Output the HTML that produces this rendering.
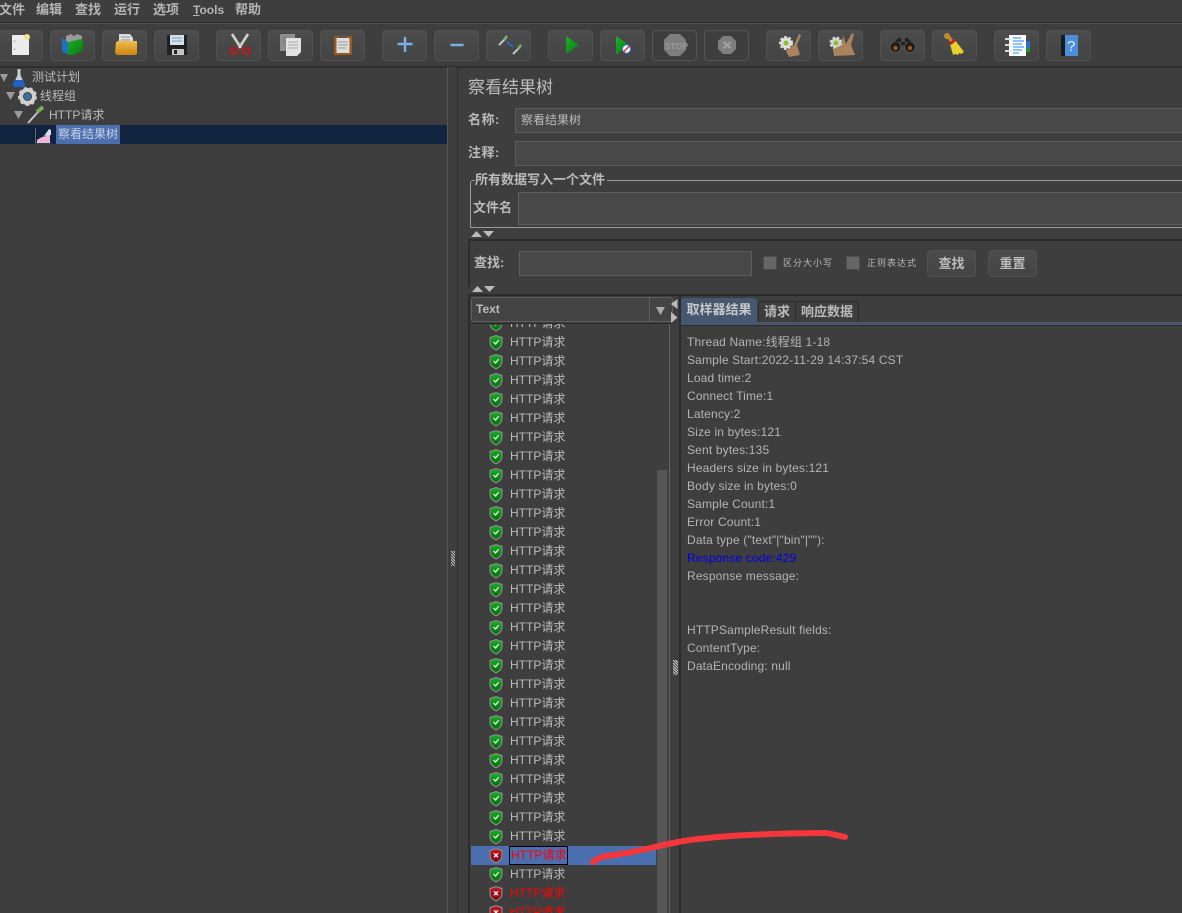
<!DOCTYPE html>
<html><head><meta charset="utf-8"><style>
html,body{margin:0;padding:0;background:#3e3e3e;}
#p{position:relative;width:1182px;height:913px;overflow:hidden;background:#3e3e3e;color:#bbb;font-family:"Liberation Sans","WenQuanYi Zen Hei","Noto Sans CJK SC",sans-serif;font-size:12px;}
#p div{position:absolute;white-space:nowrap;}
.m{top:2px;font-size:13px;font-weight:bold;color:#b5b5b5;line-height:16px;}
.b{top:30px;width:43px;height:29px;border:1px solid #505050;border-radius:4px;background:linear-gradient(#4c4c4c,#444);}
.d{background:#3e3e3e!important;border-color:#555!important;}
.i{position:absolute;left:0;top:0;}
.r{font-size:12px;line-height:19px;height:19px;color:#bbb;}
.t{left:687px;font-size:12px;line-height:18px;color:#b4b4b4;letter-spacing:.16px;}
.f{background:#484848;border:1px solid #5e5e5e;box-sizing:border-box;}
</style></head><body><div id="p">
<svg width="0" height="0" style="position:absolute"><defs>
<linearGradient id="gg" x1="0" y1="0" x2="0" y2="1"><stop offset="0" stop-color="#17ae22"/><stop offset="1" stop-color="#04700c"/></linearGradient>
<linearGradient id="rg" x1="0" y1="0" x2="0" y2="1"><stop offset="0" stop-color="#c8161e"/><stop offset="1" stop-color="#820610"/></linearGradient>
<linearGradient id="pl" x1="0" y1="0" x2="0" y2="1"><stop offset="0" stop-color="#8fc0f0"/><stop offset="1" stop-color="#3d82d0"/></linearGradient>
<linearGradient id="pg" x1="0" y1="0" x2="1" y2="1"><stop offset="0" stop-color="#1fb02a"/><stop offset="1" stop-color="#05780e"/></linearGradient>
<linearGradient id="fo" x1="0" y1="0" x2="0" y2="1"><stop offset="0" stop-color="#f0bd50"/><stop offset="1" stop-color="#c98510"/></linearGradient>
<g id="ok"><path d="M7 0 L13.500 2 V7.500 C13.500 11.500 10.500 14 7 15.500 C3.500 14 .5 11.500 .5 7.500 V2Z" fill="#8c8c8c"/><path d="M7 1.300 L12.400 3 V7.500 C12.400 10.800 9.900 12.900 7 14.100 C4.100 12.900 1.600 10.800 1.600 7.500 V3Z" fill="url(#gg)"/><path d="M4.600 7 L6.500 9 L9.600 5.200" fill="none" stroke="#fff" stroke-width="1.200"/></g>
<g id="er"><path d="M7 0 L13.500 2 V7.500 C13.500 11.500 10.500 14 7 15.500 C3.500 14 .5 11.500 .5 7.500 V2Z" fill="#8c8c8c"/><path d="M7 1.300 L12.400 3 V7.500 C12.400 10.800 9.900 12.900 7 14.100 C4.100 12.900 1.600 10.800 1.600 7.500 V3Z" fill="url(#rg)"/><path d="M5 5.300 L9 9.300 M9 5.300 L5 9.300" fill="none" stroke="#fff" stroke-width="1.300"/></g>
</defs></svg>

<div class="m" style="left:-1px">文件</div><div class="m" style="left:36px">编辑</div><div class="m" style="left:75px">查找</div><div class="m" style="left:114px">运行</div><div class="m" style="left:153px">选项</div><div class="m" style="left:193px;font-family:'Liberation Sans',sans-serif;font-size:12px"><u>T</u>ools</div><div class="m" style="left:235px">帮助</div>

<div style="left:0;top:22px;width:1182px;height:1px;background:#2b2b2b"></div>
<div style="left:0;top:23px;width:1182px;height:1px;background:#555"></div>
<div style="left:0;top:66px;width:1182px;height:1px;background:#2e2e2e"></div>

<div class="b" style="left:-2px"><svg class="i" width="43" height="29"><rect x="13" y="4" width="17" height="20" fill="#ececec"/><circle cx="15.500" cy="10" r=".8" fill="#999"/><circle cx="15.500" cy="18" r=".8" fill="#999"/><circle cx="28" cy="6" r="3" fill="#f4e48a"/></svg></div>
<div class="b" style="left:50px"><svg class="i" width="43" height="29"><path d="M15 5l5-2 3 2 3-2 5 2v9H15z" fill="#9a9a9a"/><path d="M11 7l6 4v13l-6-4z" fill="#1d72c4"/><path d="M17 11l13-3 2 2v9l-9 5h-6z" fill="url(#pg)"/></svg></div>
<div class="b" style="left:102px"><svg class="i" width="43" height="29"><path d="M16 3h11l3 4v8H16z" fill="#dcdcdc"/><path d="M18 6h9M18 9h9" stroke="#999"/><path d="M13 11l2-1h19v13l-2 1H14l-2-2z" fill="url(#fo)"/></svg></div>
<div class="b" style="left:154px"><svg class="i" width="43" height="29"><path d="M12 4h20v20H12z" fill="#202020"/><path d="M15 4h14v10H15z" fill="#cfe0f0"/><path d="M17 7h10M17 10h10" stroke="#8aa0b8"/><path d="M17 18h12v6H17z" fill="#c5c5c5"/><path d="M19 19h3v4h-3z" fill="#222"/></svg></div>
<div class="b" style="left:216px"><svg class="i" width="43" height="29"><path d="M15 3 L24 17 M31 3 L22 17" stroke="#d0d0d0" stroke-width="2.600" fill="none"/><circle cx="17" cy="20" r="3.200" fill="none" stroke="#c4161c" stroke-width="2"/><circle cx="29" cy="20" r="3.200" fill="none" stroke="#c4161c" stroke-width="2"/></svg></div>
<div class="b" style="left:268px"><svg class="i" width="43" height="29"><rect x="11" y="3" width="15" height="17" fill="#8e8e8e"/><path d="M14 7h8M14 10h8M14 13h8" stroke="#777"/><path d="M17 7h15v14l-4 4H17z" fill="#e2e2e2"/><path d="M19 11h10M19 14h10M19 17h10" stroke="#aaa"/></svg></div>
<div class="b" style="left:320px"><svg class="i" width="43" height="29"><rect x="13" y="5" width="18" height="19" rx="1" fill="#9a5a1e"/><rect x="15.500" y="7" width="13" height="15" fill="#ddd"/><path d="M17 11h10M17 14h10M17 17h8" stroke="#999"/><rect x="18" y="4" width="8" height="3" fill="#555"/></svg></div>
<div class="b" style="left:382px"><svg class="i" width="43" height="29"><path d="M14.500 13h15M22 6v15" stroke="#79b0ea" stroke-width="2.400" fill="none"/></svg></div>
<div class="b" style="left:434px"><svg class="i" width="43" height="29"><path d="M15.500 14h13" stroke="#7baee6" stroke-width="2.500" fill="none"/></svg></div>
<div class="b" style="left:486px"><svg class="i" width="43" height="29"><path d="M12 14L19 7M26 23L33 16" stroke="#c5c5c5" stroke-width="2"/><path d="M17 9L20 5M31 18L34 14" stroke="#7db36c" stroke-width="2.500"/><path d="M20 11L26 16" stroke="#1e78e0" stroke-width="1.500"/></svg></div>
<div class="b" style="left:548px"><svg class="i" width="43" height="29"><path d="M17 5L30 14L17 23Z" fill="url(#pg)"/></svg></div>
<div class="b" style="left:600px"><svg class="i" width="43" height="29"><path d="M15 5L28 14L15 24Z" fill="url(#pg)"/><circle cx="25.500" cy="18" r="4.200" fill="#e8f0fa" stroke="#2a70c8"/><path d="M22.500 21L28.500 15" stroke="#d22" stroke-width="1.300"/></svg></div>
<div class="b d" style="left:652px"><svg class="i" width="43" height="29"><path d="M17 3h10l6 6v10l-6 6H17l-6-6V9z" fill="#7e7e7e"/><text x="12" y="18" font-family="Liberation Sans" font-size="8.500" font-weight="bold" fill="#9a9a9a">STOP</text></svg></div>
<div class="b d" style="left:704px"><svg class="i" width="43" height="29"><path d="M18 5h8l5 5v8l-5 5h-8l-5-5v-8z" fill="#7e7e7e"/><path d="M18.500 11l7 6M25.500 11l-7 6" stroke="#a0a0a0" stroke-width="2.200"/></svg></div>
<div class="b" style="left:766px"><svg class="i" width="43" height="29"><circle cx="19" cy="12" r="5.500" fill="#ddd" stroke="#ddd" stroke-width="3" stroke-dasharray="2.500 1.500"/><circle cx="19" cy="12" r="2.500" fill="#8ec02b"/><path d="M32 3L34 4L30 14L33 24L22 26L19 20L27 14z" fill="#a8835c"/></svg></div>
<div class="b" style="left:818px"><svg class="i" width="43" height="29"><circle cx="17" cy="12" r="5" fill="#d5d5d5" stroke="#d5d5d5" stroke-width="3" stroke-dasharray="2.500 1.500"/><circle cx="17" cy="12" r="2.500" fill="#8ec02b"/><path d="M24 4L27 13L33 2L35 3L32 14L36 24L15 25L14 18L23 14z" fill="#a8835c"/></svg></div>
<div class="b" style="left:880px"><svg class="i" width="43" height="29"><circle cx="14.500" cy="16" r="5.500" fill="#1d1d1d" stroke="#555"/><circle cx="29" cy="16" r="5.500" fill="#1d1d1d" stroke="#555"/><path d="M14 11l3-4h3v7h4V7h3l3 4" fill="#222"/><circle cx="14.500" cy="17" r="2.200" fill="#9a5a1e"/><circle cx="29" cy="17" r="2.200" fill="#9a5a1e"/></svg></div>
<div class="b" style="left:932px"><svg class="i" width="43" height="29"><path d="M12 4l3-2 5 7-3 2z" fill="#c08a2c"/><circle cx="14" cy="5" r="3" fill="#c08a2c"/><path d="M17 13l5-4 9 12-3 2-2-1-1 2-3-1-2 1z" fill="#e8d12a"/><path d="M16 12l5-4 2 2-5 4z" fill="#d11f1f"/></svg></div>
<div class="b" style="left:994px"><svg class="i" width="43" height="29"><path d="M30 10h5v7h-5z" fill="#2a6fd0"/><path d="M30 17h5v4h-5z" fill="#1e9a2a"/><rect x="14" y="4" width="17" height="21" fill="#fff"/><path d="M18 7h8M18 10h11M18 13h9M18 16h11M18 19h9M18 22h6" stroke="#1e8be8" stroke-width="1"/><path d="M10 8h5M10 14h5M10 20h5" stroke="#ddd" stroke-width="2"/></svg></div>
<div class="b" style="left:1046px"><svg class="i" width="43" height="29"><rect x="14" y="4" width="5" height="21" fill="#1a1a1a"/><rect x="18" y="4" width="13" height="21" fill="#4b8fdc"/><text x="20" y="20" font-family="Liberation Sans" font-size="15" fill="#e6eef8">?</text></svg></div>

<div style="left:0;top:67px;width:447px;height:1px;background:#2c2c2c"></div>
<div style="left:447px;top:67px;width:1px;height:846px;background:#555"></div>
<div style="left:457px;top:67px;width:725px;height:1px;background:#2c2c2c"></div>
<div style="left:457px;top:67px;width:1px;height:846px;background:#2c2c2c"></div>
<div style="left:451px;top:551px;width:4px;height:15px;background:repeating-linear-gradient(45deg,#bbb 0 1px,#3e3e3e 1px 2px)"></div>

<div style="left:32px;top:69px;font-size:12px;line-height:17px">测试计划</div>
<div style="left:40px;top:88px;font-size:12px;line-height:17px">线程组</div>
<div style="left:49px;top:107px;font-size:12px;line-height:17px">HTTP请求</div>
<div style="left:0;top:125px;width:447px;height:19px;background:#10243f"></div>
<div style="left:56px;top:125px;width:64px;height:19px;background:#4b6eaf;color:#c8d2e4;font-size:12px;line-height:19px;text-align:center">察看结果树</div>
<svg style="position:absolute;left:0;top:68px" width="70" height="76">
<path d="M0 6h8l-4 8z M6 24h9l-4.500 8z M14 43h9l-4.500 8z" fill="#9a9a9a"/>
<path d="M17.500 1h3v6l4 9c.5 2-1 3-3 3h-5c-2 0-3.500-1-3-3l4-9z" fill="#c8cfd8"/><path d="M15 12h8l2 4c.5 2-1 3-3 3h-6c-2 0-3.500-1-3-3z" fill="#1d62c4"/>
<circle cx="27.500" cy="28.500" r="6.500" fill="none" stroke="#cfcfcf" stroke-width="4"/><circle cx="27.500" cy="28.500" r="8.500" fill="none" stroke="#cfcfcf" stroke-width="2" stroke-dasharray="3 3"/><circle cx="27.500" cy="28.500" r="3.500" fill="#3d6ea5"/>
<path d="M28 55L38 44" stroke="#c8c8c8" stroke-width="1.800"/><path d="M37 44L43 39" stroke="#79ae55" stroke-width="4"/>
<path d="M35.500 60V75H51" stroke="#666" fill="none"/><path d="M37 75v-3l5-3 4-1 4-3v10z" fill="#f0b6dc"/><path d="M44 68l5-7 2 1v5z" fill="#d4e0f0"/>
</svg>

<div style="left:468px;top:77px;font-size:17px;line-height:22px;color:#bcbcbc">察看结果树</div>
<div style="left:468px;top:112px;font-weight:bold;font-size:13px;line-height:16px;letter-spacing:.5px">名称:</div>
<div class="f" style="left:515px;top:108px;width:680px;height:25px;padding-left:5px;line-height:23px;font-size:12px">察看结果树</div>
<div style="left:468px;top:145px;font-weight:bold;font-size:13px;line-height:16px;letter-spacing:.5px">注释:</div>
<div class="f" style="left:515px;top:141px;width:680px;height:25px"></div>

<div style="left:470px;top:180px;width:720px;height:48px;box-sizing:border-box;border:1px solid #999;border-radius:3px 0 0 0"></div>
<div style="left:475px;top:172px;background:#3e3e3e;padding-right:2px;font-size:13px;font-weight:bold;line-height:16px">所有数据写入一个文件</div>
<div style="left:473px;top:200px;font-size:13px;font-weight:bold;line-height:16px">文件名</div>
<div class="f" style="left:518px;top:192px;width:680px;height:33px"></div>
<svg style="position:absolute;left:471px;top:230px" width="26" height="8"><path d="M0 7L5.500 1L11 7zM12 1h11l-5.500 6z" fill="#bbb"/></svg>
<div style="left:468px;top:239px;width:714px;height:2px;background:#2c2c2c"></div>
<div style="left:468px;top:239px;width:2px;height:48px;background:#2c2c2c"></div>

<div style="left:474px;top:255px;font-weight:bold;font-size:13px;line-height:16px">查找:</div>
<div class="f" style="left:519px;top:251px;width:233px;height:25px"></div>
<div style="left:763px;top:256px;width:12px;height:12px;background:#666;border:1px solid #4c4c4c"></div>
<div style="left:783px;top:257px;font-size:9px;line-height:12px;letter-spacing:1px">区分大小写</div>
<div style="left:846px;top:256px;width:12px;height:12px;background:#666;border:1px solid #4c4c4c"></div>
<div style="left:867px;top:257px;font-size:9px;line-height:12px;letter-spacing:1px">正则表达式</div>
<div class="b" style="left:927px;top:250px;width:47px;height:25px;text-align:center;line-height:25px;font-weight:bold;font-size:13px">查找</div>
<div class="b" style="left:988px;top:250px;width:47px;height:25px;text-align:center;line-height:25px;font-weight:bold;font-size:13px">重置</div>
<svg style="position:absolute;left:472px;top:285px" width="26" height="8"><path d="M0 7L5.500 1L11 7zM12 1h11l-5.500 6z" fill="#bbb"/></svg>
<div style="left:468px;top:294px;width:714px;height:2px;background:#2c2c2c"></div>

<div style="left:468px;top:296px;width:2px;height:617px;background:#2c2c2c"></div>
<div style="left:471px;top:297px;width:178px;height:23px;border:1px solid #5e5e5e;border-right:0;border-radius:3px 0 0 3px;background:#444;font-weight:bold;line-height:22px;text-indent:4px;font-size:12px">Text</div>
<div style="left:649px;top:297px;width:22px;height:23px;border:1px solid #5e5e5e;border-radius:0 3px 3px 0;background:#444"><svg class="i" width="22" height="23"><path d="M6 9h9l-4.500 8z" fill="#aaa"/></svg></div>
<div style="left:470px;top:323px;width:202px;height:1px;background:#2c2c2c"></div>
<div style="left:669px;top:324px;width:1px;height:589px;background:#666"></div>
<div style="left:657px;top:470px;width:10px;height:443px;background:#565656"></div>
<div style="left:471px;top:846px;width:185px;height:19px;background:#4b6eaf"></div>

<div style="left:470px;top:324px;width:186px;height:589px;overflow:hidden"><svg width="186" height="589" style="position:absolute;left:0;top:1px">
<use href="#ok" x="19" y="-9"/><use href="#ok" x="19" y="10"/><use href="#ok" x="19" y="29"/><use href="#ok" x="19" y="48"/><use href="#ok" x="19" y="67"/><use href="#ok" x="19" y="86"/><use href="#ok" x="19" y="105"/><use href="#ok" x="19" y="124"/><use href="#ok" x="19" y="143"/><use href="#ok" x="19" y="162"/><use href="#ok" x="19" y="181"/><use href="#ok" x="19" y="200"/><use href="#ok" x="19" y="219"/><use href="#ok" x="19" y="238"/><use href="#ok" x="19" y="257"/><use href="#ok" x="19" y="276"/><use href="#ok" x="19" y="295"/><use href="#ok" x="19" y="314"/><use href="#ok" x="19" y="333"/><use href="#ok" x="19" y="352"/><use href="#ok" x="19" y="371"/><use href="#ok" x="19" y="390"/><use href="#ok" x="19" y="409"/><use href="#ok" x="19" y="428"/><use href="#ok" x="19" y="447"/><use href="#ok" x="19" y="466"/><use href="#ok" x="19" y="485"/><use href="#ok" x="19" y="504"/>
<use href="#er" x="19" y="523"/><use href="#ok" x="19" y="542"/><use href="#er" x="19" y="561"/><use href="#er" x="19" y="580"/>
</svg>
<div class="r" style="left:40px;top:-10px">HTTP请求</div><div class="r" style="left:40px;top:9px">HTTP请求</div><div class="r" style="left:40px;top:28px">HTTP请求</div><div class="r" style="left:40px;top:47px">HTTP请求</div><div class="r" style="left:40px;top:66px">HTTP请求</div><div class="r" style="left:40px;top:85px">HTTP请求</div><div class="r" style="left:40px;top:104px">HTTP请求</div><div class="r" style="left:40px;top:123px">HTTP请求</div><div class="r" style="left:40px;top:142px">HTTP请求</div><div class="r" style="left:40px;top:161px">HTTP请求</div><div class="r" style="left:40px;top:180px">HTTP请求</div><div class="r" style="left:40px;top:199px">HTTP请求</div><div class="r" style="left:40px;top:218px">HTTP请求</div><div class="r" style="left:40px;top:237px">HTTP请求</div><div class="r" style="left:40px;top:256px">HTTP请求</div><div class="r" style="left:40px;top:275px">HTTP请求</div><div class="r" style="left:40px;top:294px">HTTP请求</div><div class="r" style="left:40px;top:313px">HTTP请求</div><div class="r" style="left:40px;top:332px">HTTP请求</div><div class="r" style="left:40px;top:351px">HTTP请求</div><div class="r" style="left:40px;top:370px">HTTP请求</div><div class="r" style="left:40px;top:389px">HTTP请求</div><div class="r" style="left:40px;top:408px">HTTP请求</div><div class="r" style="left:40px;top:427px">HTTP请求</div><div class="r" style="left:40px;top:446px">HTTP请求</div><div class="r" style="left:40px;top:465px">HTTP请求</div><div class="r" style="left:40px;top:484px">HTTP请求</div><div class="r" style="left:40px;top:503px">HTTP请求</div>
<div class="r" style="left:39px;top:522px;width:56px;height:17px;line-height:17px;border:1px solid #000;color:#f00;padding-left:1px">HTTP请求</div>
<div class="r" style="left:40px;top:541px">HTTP请求</div><div class="r" style="left:40px;top:560px;color:#f00">HTTP请求</div><div class="r" style="left:40px;top:579px;color:#f00">HTTP请求</div>
</div>

<svg style="position:absolute;left:670px;top:298px" width="10" height="28"><path d="M7.500 1V11L1 6zM1 14V25L7.500 19.500z" fill="#bbb"/></svg>
<div style="left:673px;top:660px;width:5px;height:15px;background:repeating-linear-gradient(45deg,#ccc 0 1px,#3e3e3e 1px 2px)"></div>
<div style="left:679px;top:296px;width:2px;height:617px;background:#2c2c2c"></div>

<div style="left:681px;top:298px;width:76px;height:24px;background:#46586f;border-radius:3px 3px 0 0;text-align:center;font-weight:bold;font-size:13px;line-height:24px;color:#c8c8c8">取样器结果</div>
<div style="left:758px;top:301px;width:36px;height:20px;border:1px solid #2c2c2c;border-bottom:0;border-radius:3px 3px 0 0;text-align:center;font-weight:bold;font-size:13px;line-height:20px">请求</div>
<div style="left:795px;top:301px;width:62px;height:20px;border:1px solid #2c2c2c;border-bottom:0;border-radius:3px 3px 0 0;text-align:center;font-weight:bold;font-size:13px;line-height:20px">响应数据</div>
<div style="left:681px;top:322px;width:501px;height:3px;background:#46586f"></div>
<div style="left:681px;top:325px;width:501px;height:1px;background:#2c2c2c"></div>

<div class="t" style="top:333px">Thread Name:线程组 1-18</div>
<div class="t" style="top:351px">Sample Start:2022-11-29 14:37:54 CST</div>
<div class="t" style="top:369px">Load time:2</div>
<div class="t" style="top:387px">Connect Time:1</div>
<div class="t" style="top:405px">Latency:2</div>
<div class="t" style="top:423px">Size in bytes:121</div>
<div class="t" style="top:441px">Sent bytes:135</div>
<div class="t" style="top:459px">Headers size in bytes:121</div>
<div class="t" style="top:477px">Body size in bytes:0</div>
<div class="t" style="top:495px">Sample Count:1</div>
<div class="t" style="top:513px">Error Count:1</div>
<div class="t" style="top:531px">Data type ("text"|"bin"|""):</div>
<div class="t" style="top:549px;color:#0000e6">Response code:429</div>
<div class="t" style="top:567px">Response message:</div>
<div class="t" style="top:621px">HTTPSampleResult fields:</div>
<div class="t" style="top:639px">ContentType:</div>
<div class="t" style="top:657px">DataEncoding: null</div>

<svg style="position:absolute;left:0;top:0" width="1182" height="913"><path d="M593 862 Q598 858 606 856 Q625 854 655 847 Q680 841 698 839 Q725 836 748 835 Q790 833 827 833 L845 837" fill="none" stroke="#f5363c" stroke-width="6" stroke-linecap="round" stroke-linejoin="round"/></svg>
</div></body></html>
